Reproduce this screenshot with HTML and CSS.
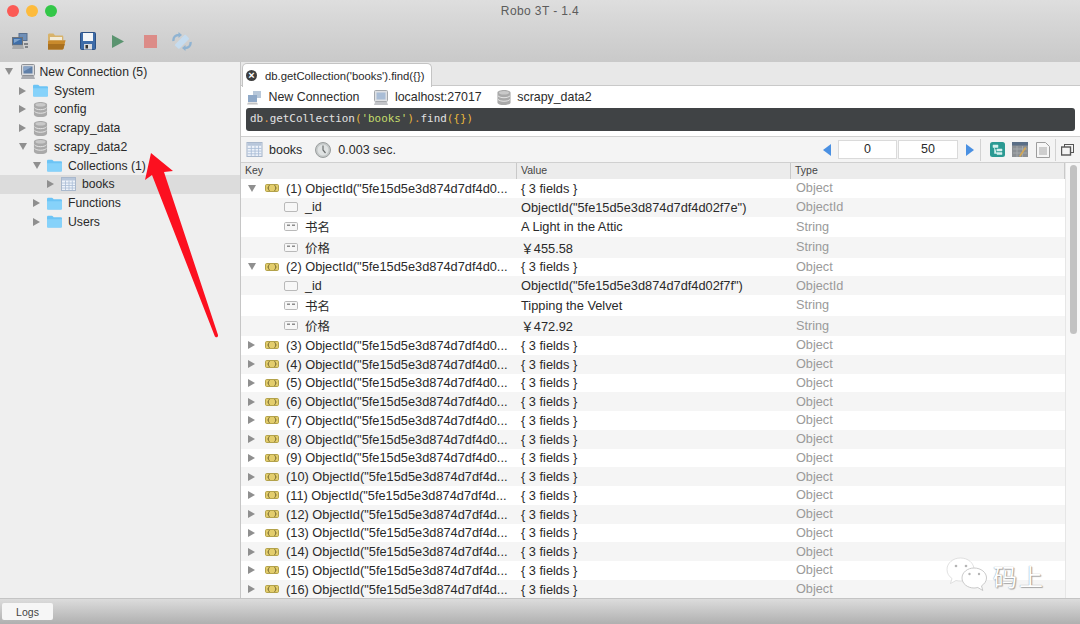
FILE: index.html
```html
<!DOCTYPE html>
<html lang="en">
<head>
    <meta charset="UTF-8">
    <meta name="viewport" content="width=device-width, initial-scale=1.0">
    <title>Robo 3T - 1.4</title>
    <link rel="stylesheet" href="styles.css">
</head>
<body>
    <svg class="defs" width="0" height="0">
        <symbol id="folder" viewBox="0 0 15 13">
            <path d="M0 2.200C0 1.300.6.8 1.400.8h3.400c.6 0 .9.2 1.200.6l.7.8h7c.8 0 1.300.5 1.300 1.300v7.800c0 .8-.5 1.300-1.300 1.300H1.300C.5 12.600 0 12.100 0 11.300z" fill="#6cc4f5"/>
            <path d="M0 4.300h15v7c0 .8-.5 1.300-1.300 1.300H1.300C.5 12.600 0 12.100 0 11.300z" fill="#86d2fa"/>
        </symbol>
        <symbol id="db" viewBox="0 0 14 16">
            <path d="M0 2.800C0 1.200 3.100 0 7 0s7 1.200 7 2.800v10.400C14 14.800 10.900 16 7 16s-7-1.200-7-2.800z" fill="#a9a9a9"/>
            <path d="M.6 6.200c1 1.200 3.400 2 6.400 2s5.400-.8 6.400-2M.6 10c1 1.200 3.400 2 6.400 2s5.400-.8 6.400-2" fill="none" stroke="#e8e8e8" stroke-width="1"/>
            <ellipse cx="7" cy="2.900" rx="5.400" ry="1.900" fill="#c9c9c9"/>
        </symbol>
        <symbol id="screen" viewBox="0 0 14 15">
            <rect x=".5" y=".5" width="13" height="11" rx="1" fill="#d9dadd" stroke="#8e9196"/>
            <rect x="2.500" y="2.500" width="9" height="7" fill="#5f7fa8"/>
            <path d="M2.500 2.500h9l-9 5z" fill="#8aa5c8"/>
            <path d="M1 12h12l1 3H0z" fill="#a9abb0"/>
        </symbol>
        <symbol id="screen-light" viewBox="0 0 14 15">
            <rect x=".5" y=".5" width="13" height="11" rx="1" fill="#dfe1e4" stroke="#a5a8ac"/>
            <rect x="2.500" y="2.500" width="9" height="7" fill="#a9bdd6"/>
            <path d="M1 12h12l1 3H0z" fill="#c2c4c8"/>
        </symbol>
        <symbol id="grid" viewBox="0 0 15 14">
            <rect x=".5" y=".5" width="14" height="13" fill="#eef3fa" stroke="#a9b8cc"/>
            <rect x="1" y="1" width="13" height="2.500" fill="#b7c6da"/>
            <path d="M1 6h13M1 8.500h13M1 11h13M4.500 3.500V13M8 3.500V13M11.300 3.500V13" stroke="#a9bcd6" stroke-width=".8" fill="none"/>
        </symbol>
        <symbol id="obj" viewBox="0 0 14 8">
            <rect x=".5" y=".5" width="13" height="7" rx="1.200" fill="#e3cd6c" stroke="#b3a24a"/>
            <path d="M4.500 1.500c-1 0-.9.7-.9 1.200 0 .7-.3 1.300-.9 1.300.6 0 .9.600.9 1.300 0 .5-.1 1.200.9 1.200M9.500 1.500c1 0 .9.7.9 1.200 0 .7.300 1.300.9 1.300-.6 0-.9.600-.9 1.300 0 .5.100 1.200-.9 1.200" fill="none" stroke="#5a5024" stroke-width=".8"/>
        </symbol>
        <symbol id="oid" viewBox="0 0 14 10">
            <rect x=".5" y=".5" width="13" height="9" rx="1.500" fill="#f7f7f7" stroke="#b9b9b9"/>
        </symbol>
        <symbol id="str" viewBox="0 0 14 9">
            <rect x=".5" y=".5" width="13" height="8" rx="1.200" fill="#f7f7f7" stroke="#b9b9b9"/>
            <path d="M3 2.500h3V4H3zM8 2.500h3V4H8z" fill="#8c8c8c"/>
        </symbol>
    </svg>

    <header class="titlebar">
        <div class="traffic">
            <span class="dot red"></span>
            <span class="dot yellow"></span>
            <span class="dot green"></span>
        </div>
        <div class="title">Robo 3T - 1.4</div>
    </header>

    <div class="toolbar">
        <svg class="tool t-conn" width="16" height="17" viewBox="0 0 16 17">
            <rect x="7" y=".5" width="8" height="7" fill="#6f8fb8" stroke="#59708f"/>
            <rect x=".5" y="4.500" width="10" height="7.500" fill="#3f6ea8" stroke="#6f7378"/>
            <path d="M2 6h7l-7 4z" fill="#7da3cc"/>
            <path d="M1 12.500h10l1 3.500H0z" fill="#a8a9aa"/>
            <path d="M12 10h4v2h-4zM13 13h3v2h-3z" fill="#7f8286"/>
        </svg>
        <svg class="tool t-open" width="19" height="19" viewBox="0 0 19 19">
            <path d="M1 3c0-1 .6-1.500 1.500-1.500h4l1.500 2h7c.8 0 1.300.5 1.300 1.300V8H1z" fill="#d8b36b"/>
            <path d="M3 5h12v5H3z" fill="#f3ecd9"/>
            <path d="M1 17.500V9.500C1 8.800 1.500 8.300 2.200 8.300H18.600L16.500 16.500c-.2.7-.7 1-1.400 1z" fill="#c98a2c"/>
            <path d="M1 12h16.800l-1.300 4.500c-.2.7-.7 1-1.400 1H1z" fill="#a9701f"/>
        </svg>
        <svg class="tool t-save" width="16" height="18" viewBox="0 0 16 18">
            <rect x=".5" y=".5" width="15" height="17" rx="1" fill="#3d6ba8" stroke="#2c5185"/>
            <rect x="3" y="1" width="10" height="8" fill="#f4f6f8"/>
            <rect x="4" y="12" width="8" height="5.500" fill="#d8dade"/>
            <rect x="5.500" y="13" width="2.500" height="3.500" fill="#333"/>
        </svg>
        <svg class="tool t-run" width="12" height="13" viewBox="0 0 12 13">
            <path d="M0 0l12 6.500L0 13z" fill="#5b9470"/>
        </svg>
        <div class="tool t-stop"></div>
        <svg class="tool t-refresh" width="20" height="19" viewBox="0 0 20 19">
            <path d="M3 12.500L12.500 3c.4-.4.900-.4 1.300 0l3 3c.4.400.4.900 0 1.300L7.500 16.500c-.4.400-.9.400-1.300 0l-3.200-3c-.3-.3-.3-.7 0-1z" fill="#c6dcef"/>
            <path d="M1.500 9C1 5 3.500 3 7 3" fill="none" stroke="#8fb3d2" stroke-width="2.400"/>
            <path d="M10 3L6.500 0v6z" fill="#8fb3d2"/>
            <path d="M18.500 10c.5 4-2 6-5.500 6" fill="none" stroke="#8fb3d2" stroke-width="2.400"/>
            <path d="M10 16l3.500-3v6z" fill="#8fb3d2"/>
        </svg>
    </div>

    <main class="app">
        <nav class="tree">
            <div class="node lv0"><span class="arrow down"></span><svg class="ico" width="14" height="15"><use href="#screen"/></svg><span>New Connection (5)</span></div>
            <div class="node lv1"><span class="arrow"></span><svg class="ico" width="15" height="13"><use href="#folder"/></svg><span>System</span></div>
            <div class="node lv1"><span class="arrow"></span><svg class="ico" width="15" height="15"><use href="#db"/></svg><span>config</span></div>
            <div class="node lv1"><span class="arrow"></span><svg class="ico" width="15" height="15"><use href="#db"/></svg><span>scrapy_data</span></div>
            <div class="node lv1"><span class="arrow down"></span><svg class="ico" width="15" height="15"><use href="#db"/></svg><span>scrapy_data2</span></div>
            <div class="node lv2"><span class="arrow down"></span><svg class="ico" width="15" height="13"><use href="#folder"/></svg><span>Collections (1)</span></div>
            <div class="node lv3 selected"><span class="arrow"></span><svg class="ico" width="15" height="14"><use href="#grid"/></svg><span>books</span></div>
            <div class="node lv2"><span class="arrow"></span><svg class="ico" width="15" height="13"><use href="#folder"/></svg><span>Functions</span></div>
            <div class="node lv2"><span class="arrow"></span><svg class="ico" width="15" height="13"><use href="#folder"/></svg><span>Users</span></div>
        </nav>

        <section class="panel">
            <div class="tabs">
                <div class="tab">
                    <span class="close">&times;</span>
                    <span>db.getCollection('books').find({})</span>
                </div>
            </div>

            <div class="query">
                <div class="info">
                    <span class="info-item"><svg width="15" height="15" viewBox="0 0 15 15"><rect x="6" y="1" width="8" height="7" fill="#b8c8da"/><rect x="1" y="5" width="9" height="7" fill="#8fa9c8"/><path d="M1 12.500h9l1 2H0z" fill="#c4c4c4"/></svg>New Connection</span>
                    <span class="info-item"><svg width="14" height="15"><use href="#screen-light"/></svg>localhost:27017</span>
                    <span class="info-item"><svg width="14" height="15"><use href="#db"/></svg>scrapy_data2</span>
                </div>
                <div class="editor">db<span class="o">.</span>getCollection<span class="y">(</span><span class="g">'books'</span><span class="y">)</span><span class="o">.</span>find<span class="y">({})</span></div>
            </div>

            <div class="resultbar">
                <svg width="17" height="15"><use href="#grid"/></svg>
                <span class="rb-name">books</span>
                <svg class="clock" width="16" height="16" viewBox="0 0 16 16"><circle cx="8" cy="8" r="7.500" fill="#c4c8c8" stroke="#9a9e9e"/><circle cx="8" cy="8" r="5.500" fill="#dfe2e2"/><path d="M8 3.500V8l2.500 3" fill="none" stroke="#6a6e6e" stroke-width="1.200"/></svg>
                <span>0.003 sec.</span>
                <div class="pager">
                    <span class="page-arrow left"></span>
                    <span class="page-box first">0</span>
                    <span class="page-box second">50</span>
                    <span class="page-arrow right"></span>
                    <span class="sep"></span>
                    <svg class="p-tree" width="15" height="15" viewBox="0 0 15 15"><rect width="15" height="15" rx="2.500" fill="#2b9a93"/><path d="M3 3h5v2.500H3zM7 7h5v2H7zM7 10.500h5v2H7zM4.500 5.500v6H7M4.500 8H7" fill="#d6f0ee" stroke="#d6f0ee" stroke-width=".5"/></svg>
                    <svg class="p-table" width="16" height="15" viewBox="0 0 16 15"><rect width="16" height="15" fill="#8b8f93"/><rect width="16" height="3.500" fill="#5a6e86"/><path d="M1 7h14M1 11h14M5 4v11M10.500 4v11" stroke="#a9adb0" stroke-width=".8"/><path d="M7 14l6-9 1.200 1-6 9z" fill="#d6a851"/></svg>
                    <svg class="p-doc" width="14" height="16" viewBox="0 0 14 16"><path d="M.5.500h9l4 4v11H.500z" fill="#f6f6f6" stroke="#9d9d9d"/><path d="M3 6h8M3 8h8M3 10h8M3 12h8" stroke="#a5a5a5"/></svg>
                    <span class="sep second-sep"></span>
                    <svg class="p-win" width="13" height="12" viewBox="0 0 13 12"><rect x="3.500" y=".5" width="9" height="8" fill="#f4f4f4" stroke="#555"/><rect x=".5" y="3" width="9" height="8" fill="#f4f4f4" stroke="#555" stroke-width="1.400"/></svg>
                </div>
            </div>

            <div class="results">
                <div class="table">
                    <div class="head"><span>Key</span><span>Value</span><span>Type</span></div>

                    <div class="row"><span class="key"><span class="arrow down"></span><svg width="14" height="8"><use href="#obj"/></svg>(1) ObjectId("5fe15d5e3d874d7df4d0...</span><span class="val">{ 3 fields }</span><span class="type">Object</span></div>
                    <div class="row alt"><span class="key child"><svg width="14" height="10"><use href="#oid"/></svg>_id</span><span class="val">ObjectId("5fe15d5e3d874d7df4d02f7e")</span><span class="type">ObjectId</span></div>
                    <div class="row cjk"><span class="key child"><svg width="14" height="9"><use href="#str"/></svg>书名</span><span class="val">A Light in the Attic</span><span class="type">String</span></div>
                    <div class="row cjk alt"><span class="key child"><svg width="14" height="9"><use href="#str"/></svg>价格</span><span class="val">￥455.58</span><span class="type">String</span></div>

                    <div class="row"><span class="key"><span class="arrow down"></span><svg width="14" height="8"><use href="#obj"/></svg>(2) ObjectId("5fe15d5e3d874d7df4d0...</span><span class="val">{ 3 fields }</span><span class="type">Object</span></div>
                    <div class="row alt"><span class="key child"><svg width="14" height="10"><use href="#oid"/></svg>_id</span><span class="val">ObjectId("5fe15d5e3d874d7df4d02f7f")</span><span class="type">ObjectId</span></div>
                    <div class="row cjk"><span class="key child"><svg width="14" height="9"><use href="#str"/></svg>书名</span><span class="val">Tipping the Velvet</span><span class="type">String</span></div>
                    <div class="row cjk alt"><span class="key child"><svg width="14" height="9"><use href="#str"/></svg>价格</span><span class="val">￥472.92</span><span class="type">String</span></div>

                    <div class="row"><span class="key"><span class="arrow"></span><svg width="14" height="8"><use href="#obj"/></svg>(3) ObjectId("5fe15d5e3d874d7df4d0...</span><span class="val">{ 3 fields }</span><span class="type">Object</span></div>
                    <div class="row alt"><span class="key"><span class="arrow"></span><svg width="14" height="8"><use href="#obj"/></svg>(4) ObjectId("5fe15d5e3d874d7df4d0...</span><span class="val">{ 3 fields }</span><span class="type">Object</span></div>
                    <div class="row"><span class="key"><span class="arrow"></span><svg width="14" height="8"><use href="#obj"/></svg>(5) ObjectId("5fe15d5e3d874d7df4d0...</span><span class="val">{ 3 fields }</span><span class="type">Object</span></div>
                    <div class="row alt"><span class="key"><span class="arrow"></span><svg width="14" height="8"><use href="#obj"/></svg>(6) ObjectId("5fe15d5e3d874d7df4d0...</span><span class="val">{ 3 fields }</span><span class="type">Object</span></div>
                    <div class="row"><span class="key"><span class="arrow"></span><svg width="14" height="8"><use href="#obj"/></svg>(7) ObjectId("5fe15d5e3d874d7df4d0...</span><span class="val">{ 3 fields }</span><span class="type">Object</span></div>
                    <div class="row alt"><span class="key"><span class="arrow"></span><svg width="14" height="8"><use href="#obj"/></svg>(8) ObjectId("5fe15d5e3d874d7df4d0...</span><span class="val">{ 3 fields }</span><span class="type">Object</span></div>
                    <div class="row"><span class="key"><span class="arrow"></span><svg width="14" height="8"><use href="#obj"/></svg>(9) ObjectId("5fe15d5e3d874d7df4d0...</span><span class="val">{ 3 fields }</span><span class="type">Object</span></div>
                    <div class="row alt"><span class="key"><span class="arrow"></span><svg width="14" height="8"><use href="#obj"/></svg>(10) ObjectId("5fe15d5e3d874d7df4d...</span><span class="val">{ 3 fields }</span><span class="type">Object</span></div>
                    <div class="row"><span class="key"><span class="arrow"></span><svg width="14" height="8"><use href="#obj"/></svg>(11) ObjectId("5fe15d5e3d874d7df4d...</span><span class="val">{ 3 fields }</span><span class="type">Object</span></div>
                    <div class="row alt"><span class="key"><span class="arrow"></span><svg width="14" height="8"><use href="#obj"/></svg>(12) ObjectId("5fe15d5e3d874d7df4d...</span><span class="val">{ 3 fields }</span><span class="type">Object</span></div>
                    <div class="row"><span class="key"><span class="arrow"></span><svg width="14" height="8"><use href="#obj"/></svg>(13) ObjectId("5fe15d5e3d874d7df4d...</span><span class="val">{ 3 fields }</span><span class="type">Object</span></div>
                    <div class="row alt"><span class="key"><span class="arrow"></span><svg width="14" height="8"><use href="#obj"/></svg>(14) ObjectId("5fe15d5e3d874d7df4d...</span><span class="val">{ 3 fields }</span><span class="type">Object</span></div>
                    <div class="row"><span class="key"><span class="arrow"></span><svg width="14" height="8"><use href="#obj"/></svg>(15) ObjectId("5fe15d5e3d874d7df4d...</span><span class="val">{ 3 fields }</span><span class="type">Object</span></div>
                    <div class="row alt"><span class="key"><span class="arrow"></span><svg width="14" height="8"><use href="#obj"/></svg>(16) ObjectId("5fe15d5e3d874d7df4d...</span><span class="val">{ 3 fields }</span><span class="type">Object</span></div>
                </div>
                <div class="scrollbar"><div class="thumb"></div></div>
            </div>
        </section>
    </main>

    <footer class="logbar">
        <span class="logs-btn">Logs</span>
    </footer>

    <!-- annotation drawn on top of the screenshot -->
    <svg class="red-arrow" width="90" height="200" viewBox="140 145 90 200">
        <path d="M151 153L173 171 164 172 218 335C218.500 338 215 338 214.500 335.500L152 175 145 180z" fill="#fc1020"/>
    </svg>

    <div class="watermark">
        <svg width="42" height="36" viewBox="0 0 42 36">
            <path d="M14.500 1C7 1 1 6 1 12.500c0 3.800 2 7 5 9l-1.500 5 5.500-3c1.300.3 2.800.5 4.500.5 7.500 0 13.500-5 13.500-11.500S22 1 14.500 1z" fill="#fff" stroke="#d4d4d4" stroke-width=".7"/>
            <circle cx="10" cy="9" r="1.300" fill="#b5b5b5"/><circle cx="20" cy="9" r="1.300" fill="#b5b5b5"/>
            <path d="M28 11c-6.500 0-12 4.400-12 10s5.500 10 12 10c1.300 0 2.600-.2 3.800-.5l5 3-1.300-4.600c2.800-1.900 5-4.700 5-7.900 0-5.600-5.500-10-12.500-10z" fill="#fff" stroke="#bdbdbd" stroke-width=".8"/>
            <circle cx="23.500" cy="17" r="1.200" fill="#b5b5b5"/><circle cx="33" cy="17" r="1.200" fill="#b5b5b5"/>
        </svg>
        <span class="wm-text">码上</span>
    </div>
</body>
</html>
```

FILE: styles.css
```css
* {
    box-sizing: border-box;
}
html, body {
    margin: 0;
    height: 624px;
    overflow: hidden;
}
body {
    position: relative;
    display: flex;
    flex-direction: column;
    font-family: "Liberation Sans", "Noto Sans CJK SC", sans-serif;
    font-size: 12.5px;
    color: #2a2a2a;
    background: #efefef;
}
.defs {
    position: absolute;
}

/* title + toolbar */
.titlebar {
    position: relative;
    height: 22px;
    flex: none;
    background: linear-gradient(#dedede, #d6d6d6);
}
.traffic {
    position: absolute;
    left: 7px;
    top: 5px;
    display: flex;
    gap: 7px;
}
.dot {
    width: 12px;
    height: 12px;
    border-radius: 50%;
}
.dot.red { background: #fb5a55; }
.dot.yellow { background: #fdbb3c; }
.dot.green { background: #33c748; }
.title {
    text-align: center;
    line-height: 22px;
    font-size: 12px;
    color: #5c5c5c;
    letter-spacing: .4px;
}
.toolbar {
    height: 40px;
    flex: none;
    display: flex;
    align-items: center;
    background: linear-gradient(#d6d6d6, #c9c9c9);
    padding: 0 0 2px 12px;
}
.tool {
    flex: none;
}
.t-open { margin-left: 19px; }
.t-save { margin-left: 14px; }
.t-run { margin-left: 16px; }
.t-stop {
    width: 13px;
    height: 13px;
    margin-left: 20px;
    background: #dc8c88;
}
.t-refresh { margin-left: 15px; }

.app {
    flex: 1;
    display: flex;
    min-height: 0;
}

/* left tree */
.tree {
    width: 241px;
    flex: none;
    font-size: 12.2px;
    background: #efefef;
    border-right: 1px solid #c6c6c6;
    padding-top: 0.5px;
}
.node {
    height: 18.75px;
    display: flex;
    align-items: center;
    white-space: nowrap;
}
.node .arrow {
    margin-right: 7px;
}
.node .arrow.down {
    margin-right: 6px;
}
.node span:last-child {
    margin-left: 6px;
}
.lv0 { padding-left: 5px; }
.lv0 .arrow.down { margin-right: 8px; }
.lv0 span:last-child { margin-left: 4.5px; }
.lv1 { padding-left: 19px; }
.lv2 { padding-left: 33px; }
.lv3 { padding-left: 47px; }
.selected {
    background: #dcdcdc;
}
.arrow {
    width: 0;
    height: 0;
    flex: none;
    border-style: solid;
    border-width: 4.5px 0 4.5px 7px;
    border-color: transparent transparent transparent #8f8f8f;
}
.arrow.down {
    border-width: 7px 4px 0 4px;
    border-color: #8f8f8f transparent transparent transparent;
}

/* right side */
.panel {
    flex: 1;
    min-width: 0;
    display: flex;
    flex-direction: column;
    background: #ececec;
}
.tabs {
    height: 24px;
    flex: none;
    padding-left: 1px;
    background: #e8e8e8;
    border-bottom: 1px solid #c9c9c9;
}
.tab {
    position: relative;
    z-index: 1;
    width: 190px;
    height: 24px;
    margin-top: 1px;
    display: flex;
    align-items: center;
    gap: 8px;
    padding-left: 3px;
    font-size: 11.3px;
    white-space: nowrap;
    background: #fff;
    border: 1px solid #c4c4c4;
    border-bottom: none;
    border-radius: 5px 5px 0 0;
}
.close {
    width: 11px;
    height: 11px;
    flex: none;
    border-radius: 50%;
    background: #3e3e3e;
    color: #fff;
    font-size: 11px;
    font-weight: bold;
    line-height: 10px;
    text-align: center;
}
.query {
    height: 51px;
    flex: none;
    background: #fff;
    padding: 0 5px;
    border-bottom: 1px solid #d0d0d0;
}
.info {
    height: 22px;
    display: flex;
    align-items: center;
    gap: 15px;
    padding-left: 1px;
    font-size: 12.4px;
}
.info-item {
    display: flex;
    align-items: center;
    gap: 6.5px;
}
.editor {
    height: 23px;
    padding-left: 4px;
    border-radius: 3px;
    background: #404345;
    color: #e2e2e2;
    font-family: "DejaVu Sans Mono", monospace;
    font-size: 10.9px;
    line-height: 22px;
}
.editor .y { color: #e8b83c; }
.editor .g { color: #c4dc6c; }
.editor .o { color: #e09440; }
.resultbar {
    height: 26px;
    flex: none;
    display: flex;
    align-items: center;
    padding-left: 5px;
    background: #f4f4f4;
    border-bottom: 1px solid #d0d0d0;
}
.rb-name {
    margin: 0 13px 0 6px;
}
.clock {
    margin-right: 7px;
}
.pager {
    margin-left: auto;
    display: flex;
    align-items: center;
    padding-right: 6px;
}
.page-box {
    height: 19px;
    background: #fff;
    border: 1px solid #dadada;
    text-align: center;
    line-height: 17px;
}
.page-box.first {
    width: 59px;
    margin-left: 7px;
}
.page-box.second {
    width: 60px;
    margin-left: 1px;
}
.page-arrow {
    width: 0;
    height: 0;
    border-style: solid;
}
.page-arrow.left {
    border-width: 6.500px 8px 6.500px 0;
    border-color: transparent #4a90e2 transparent transparent;
}
.page-arrow.right {
    margin-left: 8px;
    border-width: 6.500px 0 6.500px 8px;
    border-color: transparent transparent transparent #4a90e2;
}
.sep {
    width: 1px;
    height: 22px;
    margin-left: 6px;
    background: #d2d2d2;
}
.second-sep { margin-left: 5px; }
.p-tree { margin-left: 9px; }
.p-table { margin-left: 7px; }
.p-doc { margin-left: 8px; }
.p-win { margin-left: 5px; }
.results {
    flex: 1;
    min-height: 0;
    display: flex;
    overflow: hidden;
}
.table {
    flex: 1;
    min-width: 0;
}
.head {
    display: grid;
    grid-template-columns: 276px 274px 1fr;
    height: 16px;
    background: #ececec;
    font-size: 10.5px;
    line-height: 15px;
    color: #444;
}
.head span {
    padding-left: 4px;
    border-right: 1px solid #c9c9c9;
}
.row {
    display: grid;
    grid-template-columns: 276px 274px 1fr;
    height: 18.75px;
    align-items: center;
    font-size: 12.8px;
    white-space: nowrap;
    background: #fff;
}
.row.cjk {
    height: 20.5px;
}
.row.alt {
    background: #f5f5f5;
}
.key {
    display: flex;
    align-items: center;
    padding-left: 7px;
    overflow: hidden;
}
.key svg {
    margin: 0 7px 0 9px;
    flex: none;
}
.key .arrow {
    margin-right: 1px;
}
.key .arrow.down {
    margin-right: 0;
}
.key.child {
    padding-left: 38px;
    font-size: 12.5px;
}
.key.child svg {
    margin-left: 5px;
}
.val {
    padding-left: 4px;
}
.type {
    padding-left: 5px;
    font-size: 12.7px;
    color: #9a9a9a;
}
.scrollbar {
    width: 15px;
    flex: none;
    padding: 2px 3px 0 4px;
    background: #f7f7f7;
    border-left: 1px solid #e6e6e6;
}
.thumb {
    height: 169px;
    border-radius: 4px;
    background: #c2c2c2;
}

/* bottom */
.logbar {
    height: 26px;
    flex: none;
    padding: 4px 0 0 2px;
    background: linear-gradient(#dcdcdc, #b0b0b0);
    border-top: 1px solid #c4c4c4;
}
.logs-btn {
    display: block;
    width: 51px;
    height: 17px;
    background: #f6f6f6;
    border-radius: 2px;
    text-align: center;
    font-size: 10.5px;
    line-height: 18px;
    color: #444;
}

/* overlays */
.red-arrow {
    position: absolute;
    left: 140px;
    top: 145px;
}
.watermark {
    position: absolute;
    left: 946px;
    top: 557px;
    display: flex;
    align-items: center;
    gap: 5px;
}
.wm-text {
    font-size: 24px;
    letter-spacing: 2px;
    color: #fff;
    text-shadow: 0 0 1px #777, 1px 1px 1px #aaa;
}
```
